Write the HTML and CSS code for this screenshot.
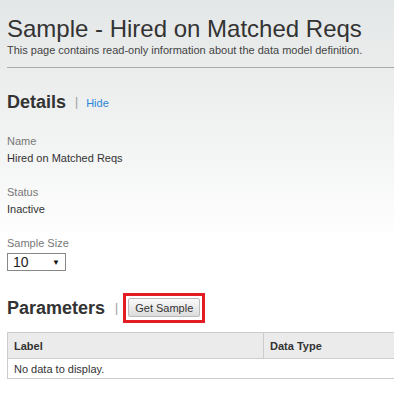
FILE: index.html
```html
<!DOCTYPE html>
<html lang="en">
<head>
    <meta charset="UTF-8">
    <title>Sample - Hired on Matched Reqs</title>
    <link rel="stylesheet" href="styles.css">
</head>
<body>

    <div class="page">
        <!-- Page Header -->
        <div class="page-header">
            <h1>Sample - Hired on Matched Reqs</h1>
            <p class="page-desc">This page contains read-only information about the data model definition.</p>
        </div>

        <!-- Details Section -->
        <div class="section-head">
            <h2>Details</h2>
            <span class="sep">|</span>
            <a href="#" class="toggle-link">Hide</a>
        </div>

        <div class="field">
            <div class="field-label">Name</div>
            <div class="field-value">Hired on Matched Reqs</div>
        </div>

        <div class="field">
            <div class="field-label">Status</div>
            <div class="field-value">Inactive</div>
        </div>

        <div class="field">
            <div class="field-label">Sample Size</div>
            <div class="select-box">
                <span>10</span>
                <span class="arrow">&#9660;</span>
            </div>
        </div>

        <!-- Parameters Section -->
        <div class="section-head params-head">
            <h2>Parameters</h2>
            <span class="sep">|</span>
            <span class="highlight">
                <button class="btn">Get Sample</button>
            </span>
        </div>

        <div class="grid-wrap">
            <table class="grid">
                <thead>
                    <tr>
                        <th class="col-label">Label</th>
                        <th>Data Type</th>
                    </tr>
                </thead>
                <tbody>
                    <tr>
                        <td colspan="2">No data to display.</td>
                    </tr>
                </tbody>
            </table>
        </div>
    </div>

</body>
</html>
```

FILE: styles.css
```css
/* General Styles */
* {
    margin: 0;
    padding: 0;
    box-sizing: border-box;
}

html, body {
    height: 100%;
}

body {
    font-family: 'Liberation Sans', Arial, sans-serif;
    color: #333;
    background: linear-gradient(to bottom, #e4e7e7 0px, #f3f4f4 150px, #ffffff 240px);
    overflow: hidden;
}

.page {
    padding-left: 7px;
}

/* Header */
.page-header {
    padding-top: 14px;
    padding-bottom: 10px;
    border-bottom: 1px solid #aaa;
}

h1 {
    font-size: 24px;
    font-weight: normal;
    line-height: 30px;
    color: #333;
}

.page-desc {
    font-size: 11px;
    line-height: 13px;
    color: #444;
}

/* Section headings */
.section-head {
    display: flex;
    align-items: center;
    margin-top: 22px;
    height: 24px;
}

h2 {
    font-size: 18px;
    font-weight: bold;
    color: #333;
}

.sep {
    font-size: 12px;
    color: #999;
    margin: 0 8px 0 9px;
}

.toggle-link {
    font-size: 11px;
    color: #2a86d6;
    text-decoration: none;
    margin-top: 2px;
}

/* Fields */
.field {
    margin-top: 21px;
    font-size: 11px;
    line-height: 13px;
}

.section-head + .field {
    margin-top: 21px;
}

.field-label {
    color: #777;
    margin-bottom: 4px;
}

.field-value {
    color: #333;
}

.select-box {
    display: flex;
    justify-content: space-between;
    align-items: center;
    width: 59px;
    height: 18px;
    border: 1px solid #888;
    background-color: #fff;
    padding: 0 5px 0 5px;
    font-size: 14px;
    color: #222;
    margin-top: -1px;
}

.select-box .arrow {
    font-size: 8px;
    color: #111;
}

/* Parameters */
.params-head {
    margin-top: 22px;
    height: 30px;
}

.params-head .sep {
    margin: 0 5px 0 10px;
}

.highlight {
    display: inline-block;
    border: 3px solid #e31b23;
    padding: 2px 2px 3px 2px;
}

.btn {
    font-family: 'Liberation Sans', Arial, sans-serif;
    font-size: 11px;
    color: #333;
    height: 19px;
    padding: 0 6px;
    border: 1px solid #bbb;
    border-radius: 2px;
    background: linear-gradient(to bottom, #fafafa, #dcdcdc);
    cursor: pointer;
}

/* Table */
.grid-wrap {
    overflow: hidden;
    margin-top: 9px;
}

.grid {
    width: 420px;
    border-collapse: collapse;
    font-size: 11px;
}

.grid th,
.grid td {
    text-align: left;
    padding: 0 6px;
    border: 1px solid #ccc;
}

.grid th {
    height: 26px;
    background-color: #ebebeb;
    color: #333;
    font-weight: bold;
}

.grid .col-label {
    width: 256px;
}

.grid td {
    height: 20px;
    background-color: #fff;
    color: #333;
}
```
